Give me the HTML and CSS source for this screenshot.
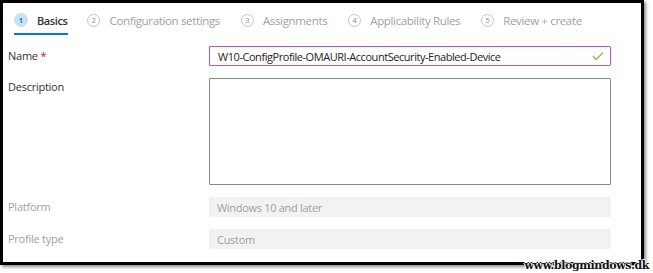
FILE: index.html
```html
<!DOCTYPE html>
<html>
<head>
<meta charset="utf-8">
<link rel="stylesheet" href="styles.css">
</head>
<body>
<div class="frame">
  <div class="tabs">
    <div class="tab active"><span class="num">1</span><span class="tlabel">Basics</span></div>
    <div class="tab"><span class="num">2</span><span class="tlabel">Configuration settings</span></div>
    <div class="tab"><span class="num">3</span><span class="tlabel">Assignments</span></div>
    <div class="tab"><span class="num">4</span><span class="tlabel">Applicability Rules</span></div>
    <div class="tab"><span class="num">5</span><span class="tlabel">Review + create</span></div>
  </div>
  <div class="form">
    <div class="row name-row">
      <div class="label">Name <span class="req">*</span></div>
      <div class="input valid"><span class="val">W10-ConfigProfile-OMAURI-AccountSecurity-Enabled-Device</span>
        <svg class="check" width="12" height="10" viewBox="0 0 12 10"><path d="M1 5.2 L4.2 8.4 L11 1.6" fill="none" stroke="#7fba4a" stroke-width="1.3"/></svg>
      </div>
    </div>
    <div class="row desc-row">
      <div class="label">Description</div>
      <div class="textarea"></div>
    </div>
    <div class="row dis-row">
      <div class="label dis">Platform</div>
      <div class="input disabled">Windows 10 and later</div>
    </div>
    <div class="row dis-row">
      <div class="label dis">Profile type</div>
      <div class="input disabled">Custom</div>
    </div>
  </div>
</div>
<div class="watermark">www.blogmindows.dk</div>
</body>
</html>
```
FILE: styles.css
```css
html, body {
  margin: 0;
  padding: 0;
  background: #fff;
  width: 653px;
  height: 273px;
  overflow: hidden;
  position: relative;
}
body {
  font-family: "Open Sans", "Noto Sans", sans-serif;
  color: #323130;
}
.frame {
  box-sizing: border-box;
  width: 644px;
  height: 265px;
  border: 3px solid #000;
  box-shadow: 2px 2px 3px rgba(0,0,0,0.45);
  background: #fff;
  overflow: hidden;
}
.tabs {
  display: flex;
  align-items: center;
  height: 32px;
  padding-left: 11px;
  white-space: nowrap;
}
.tab {
  display: flex;
  align-items: center;
  flex: none;
  height: 32px;
  padding-top: 2px;
  box-sizing: border-box;
  margin-right: 21px;
  position: relative;
}
.tab.active { margin-right: 20px; }
.tab.active::after {
  content: "";
  position: absolute;
  left: 0;
  right: -1px;
  bottom: 0;
  height: 2px;
  background: #0078d4;
}
.num {
  box-sizing: border-box;
  width: 13px;
  height: 13px;
  border-radius: 50%;
  border: 1px solid #c8c6c4;
  font-size: 7.5px;
  line-height: 11px;
  text-align: center;
  color: #8a8886;
  margin-right: 9px;
  flex: none;
}
.tab.active .num {
  width: 14px;
  height: 14px;
  line-height: 12px;
  background: #c7e0f4;
  border-color: #c7e0f4;
  color: #005a9e;
  font-weight: 600;
  margin-right: 9px;
}
.tlabel {
  font-size: 11.5px;
  color: #a19f9d;
  letter-spacing: -0.35px;
}
.tab.active .tlabel {
  color: #323130;
  font-weight: 600;
  font-size: 11px;
  letter-spacing: -0.4px;
}
.form {
  padding-left: 5px;
  padding-top: 11px;
}
.row {
  display: flex;
  align-items: flex-start;
}
.label {
  width: 201px;
  flex: none;
  font-size: 11px;
  letter-spacing: -0.25px;
  color: #323130;
}
.label.dis { color: #a19f9d; }
.req { color: #a4262c; }
.name-row .label { padding-top: 2px; }
.input {
  box-sizing: border-box;
  width: 402px;
  height: 20px;
  display: flex;
  align-items: center;
  padding-left: 8px;
  font-size: 11px;
  letter-spacing: -0.45px;
}
.input.valid {
  border: 1.5px solid #b857c9;
  justify-content: space-between;
  padding-right: 6px;
  border-radius: 1px;
  color: #252423;
}
.check { flex: none; }
.desc-row { margin-top: 12px; }
.desc-row .label { padding-top: 1px; }
.textarea {
  box-sizing: border-box;
  width: 402px;
  height: 107px;
  border: 1px solid #8a8886;
  border-radius: 1px;
}
.dis-row { margin-top: 12px; }
.dis-row .label { padding-top: 2px; }
.input.disabled {
  background: #f3f2f1;
  color: #a19f9d;
  letter-spacing: -0.3px;
}
.watermark {
  position: absolute;
  right: 4px;
  bottom: 1px;
  font-family: "DejaVu Serif", serif;
  font-weight: bold;
  font-size: 11px;
  color: #111;
  letter-spacing: -0.4px;
  text-shadow: 1px 0 0 #fff, -1px 0 0 #fff, 0 1px 0 #fff, 0 -1px 0 #fff;
}
```
